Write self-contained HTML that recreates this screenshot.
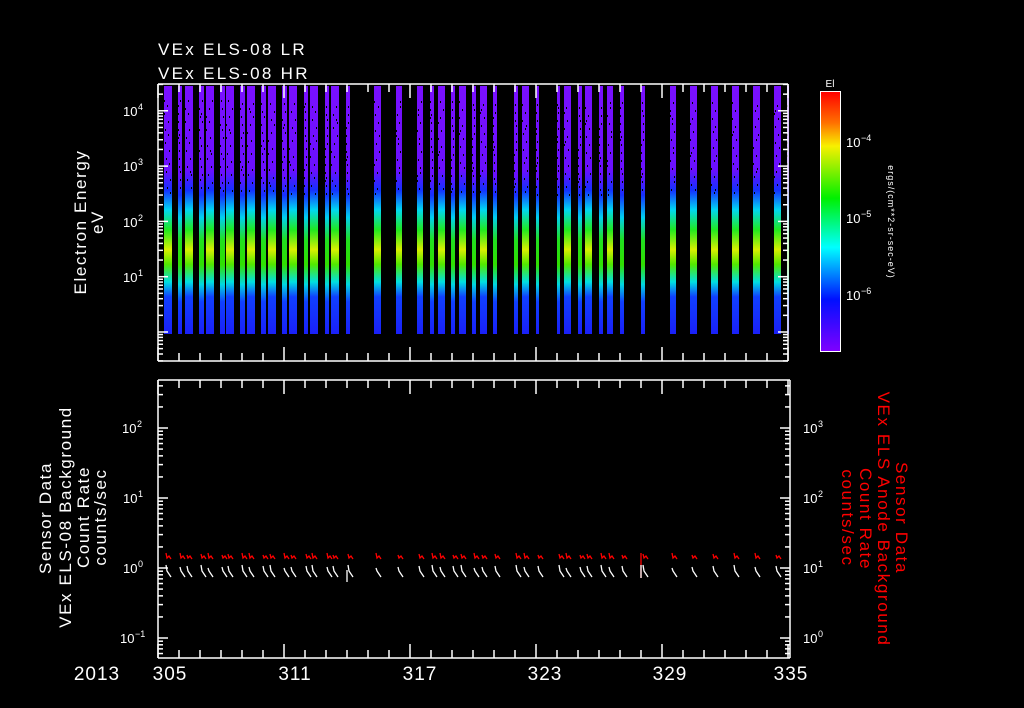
<!DOCTYPE html>
<html><head><meta charset="utf-8"><style>
html,body{margin:0;padding:0;background:#000;width:1024px;height:708px;overflow:hidden}
svg{display:block}
text{font-family:"Liberation Sans",sans-serif;}
</style></head><body>
<svg id="s" width="1024" height="708" viewBox="0 0 1024 708" xmlns="http://www.w3.org/2000/svg">
<defs>
<linearGradient id="gw" gradientUnits="userSpaceOnUse" x1="0" y1="86" x2="0" y2="334">
<stop offset="0" stop-color="#7a10ff"/>
<stop offset="0.34" stop-color="#6a10ff"/>
<stop offset="0.42" stop-color="#1530ff"/>
<stop offset="0.5" stop-color="#00d8f0"/>
<stop offset="0.58" stop-color="#20e820"/>
<stop offset="0.66" stop-color="#d8f000"/>
<stop offset="0.72" stop-color="#50e800"/>
<stop offset="0.79" stop-color="#00e0e0"/>
<stop offset="0.85" stop-color="#1040ff"/>
<stop offset="1" stop-color="#1a20f8"/>
</linearGradient>
<linearGradient id="gn" gradientUnits="userSpaceOnUse" x1="0" y1="86" x2="0" y2="334">
<stop offset="0" stop-color="#7a10ff"/>
<stop offset="0.36" stop-color="#6a10ff"/>
<stop offset="0.44" stop-color="#1530ff"/>
<stop offset="0.53" stop-color="#00d0f0"/>
<stop offset="0.62" stop-color="#20e020"/>
<stop offset="0.72" stop-color="#30e000"/>
<stop offset="0.8" stop-color="#00d8e0"/>
<stop offset="0.87" stop-color="#1040ff"/>
<stop offset="1" stop-color="#1a20f8"/>
</linearGradient>
<linearGradient id="cb" x1="0" y1="0" x2="0" y2="1">
<stop offset="0" stop-color="#ff0000"/>
<stop offset="0.12" stop-color="#ff7000"/>
<stop offset="0.21" stop-color="#f8f000"/>
<stop offset="0.41" stop-color="#00f000"/>
<stop offset="0.6" stop-color="#00ffff"/>
<stop offset="0.8" stop-color="#0010ff"/>
<stop offset="1" stop-color="#8000ff"/>
</linearGradient>
</defs>
<g id="bars"></g>
<g id="ax" stroke="#fff" stroke-width="1.5" fill="none"></g>
<g id="dat" fill="none" stroke-width="1.3"></g>
<g fill="#fff" font-size="17">
<text x="158" y="55" letter-spacing="2.3">VEx ELS-08 LR</text>
<text x="158" y="79" letter-spacing="2.3">VEx ELS-08 HR</text>
<text transform="translate(86,222) rotate(-90)" text-anchor="middle" font-size="17" letter-spacing="1.6">Electron Energy</text>
<text transform="translate(103,222) rotate(-90)" text-anchor="middle" font-size="17" letter-spacing="1.6">eV</text>
<text transform="translate(51,518) rotate(-90)" text-anchor="middle" font-size="17" letter-spacing="1.6">Sensor Data</text>
<text transform="translate(71,517) rotate(-90)" text-anchor="middle" font-size="17" letter-spacing="1.6">VEx ELS-08 Background</text>
<text transform="translate(89,517) rotate(-90)" text-anchor="middle" font-size="17" letter-spacing="1.6">Count Rate</text>
<text transform="translate(106,517) rotate(-90)" text-anchor="middle" font-size="17" letter-spacing="1.6">counts/sec</text>
<text x="830" y="87" text-anchor="middle" font-size="10">El</text>
<text transform="translate(888,222) rotate(90)" text-anchor="middle" font-size="9" letter-spacing="1">ergs/(cm**2-sr-sec-eV)</text>
</g>
<g fill="#f00" font-size="17" letter-spacing="1.6">
<text transform="translate(896,518) rotate(90)" text-anchor="middle">Sensor Data</text>
<text transform="translate(878,519) rotate(90)" text-anchor="middle">VEx ELS Anode Background</text>
<text transform="translate(860,519) rotate(90)" text-anchor="middle">Count Rate</text>
<text transform="translate(842,518) rotate(90)" text-anchor="middle">counts/sec</text>
</g>
<g fill="#fff" font-size="19" letter-spacing="1">
<text x="97" y="680" text-anchor="middle">2013</text>
<text x="170" y="680" text-anchor="middle">305</text>
<text x="295" y="680" text-anchor="middle">311</text>
<text x="420" y="680" text-anchor="middle">317</text>
<text x="545" y="680" text-anchor="middle">323</text>
<text x="670" y="680" text-anchor="middle">329</text>
<text x="791" y="680" text-anchor="middle">335</text>
</g>
<rect x="820.5" y="91.5" width="20" height="260" fill="url(#cb)" stroke="#fff" stroke-width="1"/>
<g id="lbl" fill="#fff" font-size="12"></g>
</svg>
<script>
var NS="http://www.w3.org/2000/svg";
function el(p,t,a){var e=document.createElementNS(NS,t);for(var k in a)e.setAttribute(k,a[k]);document.getElementById(p).appendChild(e);return e;}
var bars=[[164,8],[178,4],[185,8],[199,5],[206,8],[220,5],[226,8],[240,5],[247,8],[261,5],[268,8],[282,5],[289,8],[304,4],[310,8],[325,4],[331,8],[346,4],[374,7],[396,6],[417,6],[430,4],[438,7],[451,4],[459,7],[472,4],[480,7],[493,4],[514,4],[522,7],[536,3],[557,3],[564,7],[578,4],[585,7],[599,4],[607,6],[620,4],[641,4],[670,6],[690,7],[711,7],[732,7],[753,7],[774,7],[787,2]];
bars.forEach(function(b,i){
 el("bars","rect",{x:b[0],y:86,width:b[1],height:248,fill:b[1]>=6?"url(#gw)":"url(#gn)"});
 for(var j=0;j<14;j++){var yy=100+((i*37+j*29)%95);el("bars","rect",{x:b[0]+((i*3+j)%Math.max(1,b[1]-1)),y:yy,width:1,height:2,fill:"#000"});}
});
function L(x1,y1,x2,y2){el("ax","line",{x1:x1,y1:y1,x2:x2,y2:y2});}
L(158,84,788,84);L(158,361,788,361);L(158,84,158,361);L(788,84,788,361);
L(158,380,790,380);L(158,658,790,658);L(158,380,158,658);L(790,380,790,658);
for(var i=0;i<=30;i++){var x=158+i*21;var maj=(i%6==0);var len=maj?14:8;
 L(x,84,x,84+len);L(x,361,x,361-len);L(x,380,x,380+len);L(x,658,x,658-len);}
function logt(x0,dir,ytop,ybot,d0y,dec){
 for(var k=-6;k<8;k++){var yd=d0y-k*dec;
  for(var m=1;m<10;m++){var y=yd-Math.log10(m)*dec; if(y<ytop||y>ybot)continue;
   var len=m==1?10:5; L(x0,y,x0+dir*len,y);}}}
logt(158,1,84,361,332,55.3);logt(788,-1,84,361,332,55.3);
logt(158,1,380,658,568,70);logt(790,-1,380,658,568,70);
function lab(x,y,e){var t=el("lbl","text",{x:x,y:y,"font-size":13});t.textContent="10";var s=el("lbl","text",{x:x+15,y:y-6,"font-size":9});s.textContent=e;}
lab(123,116,"4");lab(123,171,"3");lab(123,227,"2");lab(123,282,"1");
lab(122,433,"2");lab(123,503,"1");lab(123,573,"0");lab(120,643,"−1");
lab(803,433,"3");lab(803,503,"2");lab(803,573,"1");lab(803,643,"0");
lab(846,147,"−4");lab(846,223,"−5");lab(846,300,"−6");
for(var k=0;k<4;k++){var yd=145+k*76;for(var m=1;m<10;m++){var y=yd-Math.log10(m)*76;if(y<92||y>351)continue;el("ax","line",{x1:840,y1:y,x2:m==1?832:835,y2:y,"stroke-width":1});}}
bars.forEach(function(b,i){ if(b[0]>785)return;
 var x=b[0]+2, r=(i*13)%7;
 el("dat","polyline",{points:[x,553+r%3,x+1,558,x+3,556,x+5,559].join(" "),stroke:"#f00"});
 el("dat","polyline",{points:[x,565+r%4,x+1,571,x+3,574,x+5,577].join(" "),stroke:"#fff"});
});
el("dat","line",{x1:347,y1:570,x2:347,y2:582,stroke:"#fff"});
el("dat","line",{x1:641,y1:553,x2:641,y2:578,stroke:"#f00"});
el("dat","line",{x1:641,y1:565,x2:641,y2:578,stroke:"#fff"});
</script>
</body></html>
